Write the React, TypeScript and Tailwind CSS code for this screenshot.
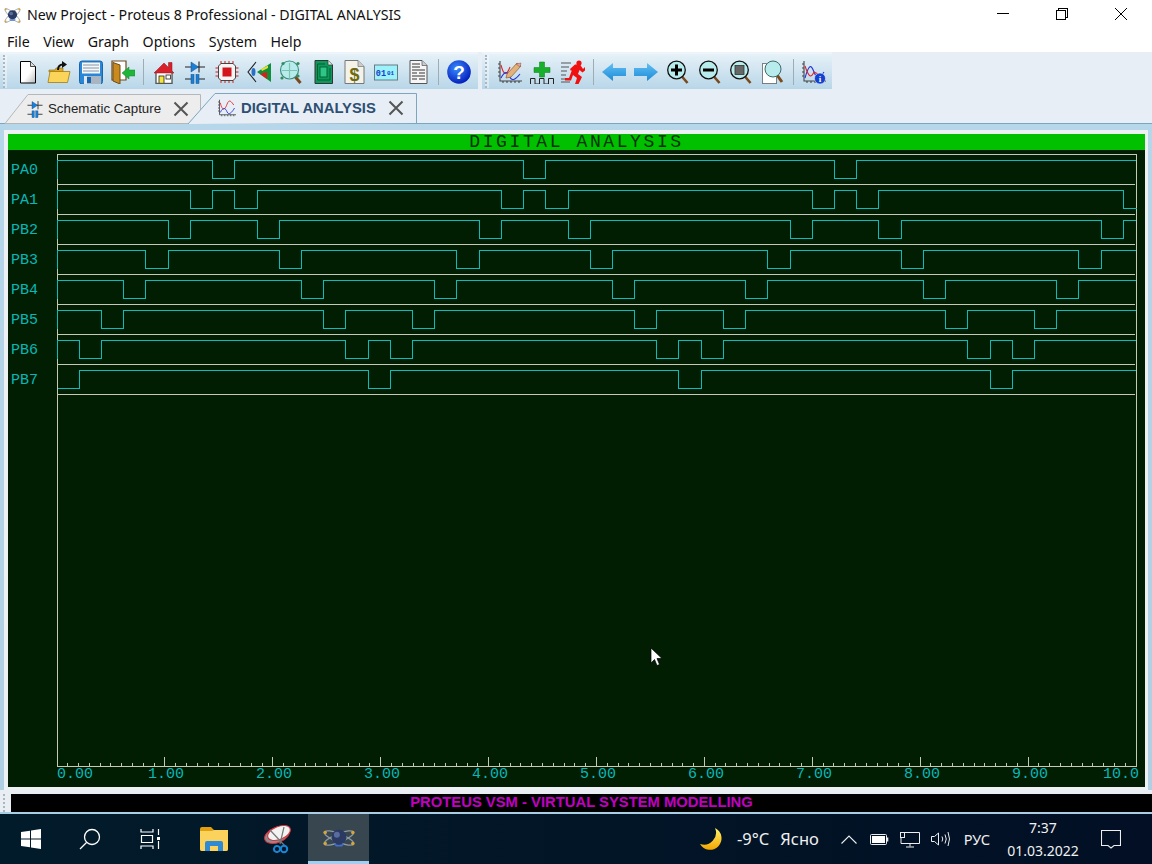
import React from "react"

type IconProps = { className?: string }

const signals: { name: string; pulses: number[][] }[] = [
  { name: "PA0", pulses: [[212.5, 234.5], [523.5, 545.5], [834.5, 856.5]] },
  { name: "PA1", pulses: [[190.5, 212.5], [234.5, 257.5], [501.5, 523.5], [545.5, 568.5], [812.5, 834.5], [856.5, 878.5], [1123.5, 1137]] },
  { name: "PB2", pulses: [[168.5, 190.5], [257.5, 279.5], [479.5, 501.5], [568.5, 590.5], [790.5, 812.5], [878.5, 901.5], [1101.5, 1123.5]] },
  { name: "PB3", pulses: [[145.5, 168.5], [279.5, 301.5], [456.5, 479.5], [590.5, 612.5], [767.5, 790.5], [901.5, 923.5], [1078.5, 1101.5]] },
  { name: "PB4", pulses: [[123.5, 145.5], [301.5, 323.5], [434.5, 456.5], [612.5, 634.5], [745.5, 767.5], [923.5, 945.5], [1056.5, 1078.5]] },
  { name: "PB5", pulses: [[101.5, 123.5], [323.5, 345.5], [412.5, 434.5], [634.5, 656.5], [723.5, 745.5], [945.5, 967.5], [1034.5, 1056.5]] },
  { name: "PB6", pulses: [[79.5, 101.5], [345.5, 368.5], [390.5, 412.5], [656.5, 678.5], [701.5, 723.5], [967.5, 990.5], [1012.5, 1034.5]] },
  { name: "PB7", pulses: [[57.5, 79.5], [368.5, 390.5], [678.5, 701.5], [990.5, 1012.5]] },
]

function wavePath(pulses: number[][], row: number) {
  const high = 160.5 + row * 30
  const low = 178.5 + row * 30
  let d = `M57.5 ${low}`
  if (pulses[0][0] > 58) d += ` V${high}`
  pulses.forEach(([a, b], i) => {
    if (i > 0 || a > 58) d += ` H${a} V${low}`
    d += ` H${b}`
    if (b < 1136) d += ` V${high}`
  })
  return d + " H1136"
}

const ticks = Array.from({ length: 100 }, (_, i) => i + 1)

function Plot() {
  return (
    <svg width="1080" height="613" viewBox="57 154 1080 613" className="block" shapeRendering="crispEdges">
      <path d="M57.5 154.5 H1136.5 V766.5 H57.5 Z" fill="none" stroke="#c6c9b8" />
      {signals.map((_, i) => (
        <path key={i} d={`M58 ${184.5 + i * 30} H1135`} stroke="#c6c9b8" />
      ))}
      {ticks.map((t) => {
        const x = Math.floor(57 + t * 10.79) + 0.5
        return <path key={t} d={`M${x} 766 V${t % 10 === 0 ? 757 : 763}`} stroke="#c6c9b8" />
      })}
      {signals.map((s, i) => (
        <path key={s.name} d={wavePath(s.pulses, i)} fill="none" stroke="#0cbcbc" />
      ))}
    </svg>
  )
}

function Proteus({ className, tilt }: IconProps & { tilt: number }) {
  const rad = (tilt * Math.PI) / 180
  const dx = Math.cos(rad) * 14
  const dy = Math.sin(rad) * 14
  return (
    <svg viewBox="0 0 32 32" className={className}>
      <ellipse cx="16" cy="16" rx="15" ry="4" fill="none" stroke="#8d99a3" strokeWidth="1.2" transform={`rotate(${tilt} 16 16)`} />
      <ellipse cx="16" cy="16" rx="15" ry="4" fill="none" stroke="#8d99a3" strokeWidth="1.2" transform={`rotate(${-tilt} 16 16)`} />
      <circle cx="16" cy="15" r="7" fill="#2b3a63" />
      <circle cx="14" cy="13" r="2.8" fill="#5a6c9c" />
      <path d="M11 21q5 3 10 0l-2 3h-6z" fill="#3f6fd6" />
      <circle cx={16 - dx} cy={16 - dy} r="1.6" fill="#d9a437" />
      <circle cx={16 + dx} cy={16 - dy} r="1.6" fill="#d9a437" />
      <circle cx={16 - dx} cy={16 + dy} r="1.6" fill="#d9a437" />
      <circle cx={16 + dx} cy={16 + dy} r="1.6" fill="#d9a437" />
    </svg>
  )
}

function NewDoc() {
  return (
    <svg viewBox="0 0 24 24" className="w-6 h-6">
      <defs>
        <linearGradient id="docg" x1="0" y1="0" x2="1" y2="1">
          <stop offset="0.55" stopColor="#fff" />
          <stop offset="1" stopColor="#b8b8b8" />
        </linearGradient>
      </defs>
      <path d="M5.5 1.5H15.5L20.5 6.5V23H5.5Z" fill="url(#docg)" stroke="#000" />
      <path d="M15.5 1.5V6.5H20.5" fill="#ddd" stroke="#000" strokeWidth="0.7" />
    </svg>
  )
}

function OpenFolder() {
  return (
    <svg viewBox="0 0 24 24" className="w-6 h-6">
      <path d="M2 10h6l1-2h7v4H2z" fill="#e0a920" stroke="#8a6a10" strokeWidth="0.6" />
      <path d="M3 11.5H23L20.5 22.5H1Z" fill="#fbd559" stroke="#a07c14" strokeWidth="0.8" />
      <path d="M11 10c0-4 2-5.5 5-5.5" fill="none" stroke="#111" strokeWidth="2" />
      <path d="M15 1l5 3.5-5 3.5z" fill="#111" />
    </svg>
  )
}

function Save() {
  return (
    <svg viewBox="0 0 24 24" className="w-6 h-6">
      <rect x="0.5" y="1" width="23" height="23" rx="2.5" fill="#2a86d6" stroke="#1b66a8" />
      <rect x="3" y="2.5" width="18" height="11" fill="#f4f8fb" />
      <path d="M4 5h16M4 8h16M4 11h16" stroke="#7a8a99" strokeWidth="0.9" />
      <rect x="5" y="16" width="17" height="8" fill="#a9b6c2" />
      <rect x="8" y="17" width="4" height="6" fill="#1566b6" />
      <rect x="5" y="16" width="3" height="8" fill="#dfe6ec" />
    </svg>
  )
}

function ExitDoor() {
  return (
    <svg viewBox="0 0 24 24" className="w-6 h-6">
      <path d="M1 1H15V20H1Z" fill="#fff" stroke="#6e4a1c" strokeWidth="1.2" />
      <path d="M2 2.5L9 5V24L2 21Z" fill="#c98a1e" stroke="#6e4a1c" />
      <path d="M11 13L18 7V10H24V16H18V19Z" fill="#1fb53a" stroke="#128a26" strokeWidth="0.5" />
    </svg>
  )
}

function Home() {
  return (
    <svg viewBox="0 0 24 24" className="w-6 h-6">
      <rect x="4" y="12" width="16" height="11.5" fill="#fff" stroke="#222" />
      <path d="M2 13L12 3L16.5 7.5V2.5H20V11L22 13Z" fill="#d9202a" stroke="#8c1118" strokeWidth="0.5" />
      <rect x="7" y="16" width="5" height="7.5" fill="#f6e63a" stroke="#222" strokeWidth="0.8" />
      <rect x="14" y="15" width="4.5" height="4" fill="#fff" stroke="#222" strokeWidth="0.8" />
      <path d="M4 23.5H20" stroke="#555" strokeWidth="1.4" />
    </svg>
  )
}

function Schematic({ className = "w-6 h-6" }: IconProps) {
  return (
    <svg viewBox="0 0 24 24" className={className}>
      <path d="M2 7H22M2 19H9.5M14.5 19H22" stroke="#222" strokeWidth="1.1" />
      <path d="M8 2V12L15.5 7Z" fill="#1b7fd6" stroke="#0c4f8e" strokeWidth="0.5" />
      <path d="M16 1.5V12.5" stroke="#222" strokeWidth="1.1" />
      <rect x="8" y="14.5" width="3" height="9" fill="#1b7fd6" stroke="#0c4f8e" strokeWidth="0.5" />
      <rect x="13" y="14.5" width="3" height="9" fill="#1b7fd6" stroke="#0c4f8e" strokeWidth="0.5" />
    </svg>
  )
}

function Chip() {
  return (
    <svg viewBox="0 0 24 24" className="w-6 h-6">
      <path d="M6 1V5M10 1V5M14 1V5M18 1V5M6 19V23M10 19V23M14 19V23M18 19V23M0.5 8H5M0.5 12H5M0.5 16H5M19 8H23.5M19 12H23.5M19 16H23.5" stroke="#e05a5a" strokeWidth="1.5" />
      <path d="M6 3.5H18L20.5 6V18L18 20.5H6L3.5 18V6Z" fill="#f4f4f4" stroke="#333" strokeWidth="0.9" />
      <rect x="7.5" y="7.5" width="9" height="9" fill="#d4141c" />
    </svg>
  )
}

function View3D() {
  return (
    <svg viewBox="0 0 24 24" className="w-6 h-6">
      <path d="M9 2L1 12L9 22" fill="none" stroke="#222" strokeWidth="1.1" />
      <ellipse cx="6.5" cy="12" rx="2" ry="4" fill="#2b6fc4" />
      <path d="M10 12L24 3V22Z" fill="#0e8f3a" />
      <path d="M14 9L21 5.5V8L15 11Z" fill="#e7dc2e" />
      <path d="M13 14L20 12V19Z" fill="#e21a1a" />
    </svg>
  )
}

function Magnifier({ children, lens = "#b8ecec" }: { children?: React.ReactNode; lens?: string }) {
  return (
    <svg viewBox="0 0 24 24" className="w-6 h-6">
      <path d="M15.5 16L21.5 23" stroke="#7a4a1a" strokeWidth="2.6" />
      <circle cx="10.5" cy="10" r="8.8" fill={lens} stroke="#111" strokeWidth="1.3" />
      {children}
    </svg>
  )
}

function ZoomArea() {
  return (
    <svg viewBox="0 0 24 24" className="w-6 h-6">
      <path d="M15.5 16L21.5 23" stroke="#7a4a1a" strokeWidth="3" />
      <circle cx="10.5" cy="10" r="9" fill="#b8ecec" stroke="#3c8f7e" strokeWidth="1.2" />
      <path d="M3 10.5H18M10.5 3V18" stroke="#7cc4b0" strokeWidth="1.2" />
      <circle cx="4" cy="3.5" r="1.6" fill="#2e8f5a" />
      <circle cx="19" cy="3.5" r="1.6" fill="#2e8f5a" />
      <circle cx="3" cy="18" r="1.6" fill="#2e8f5a" />
      <circle cx="19" cy="16" r="1.6" fill="#2e8f5a" />
    </svg>
  )
}

function Pcb() {
  return (
    <svg viewBox="0 0 24 24" className="w-6 h-6">
      <path d="M4 0.5H17L21.5 5V23.5H4Z" fill="#0c9a5c" stroke="#333" />
      <path d="M17 0.5V5H21.5" fill="#e8e8e8" stroke="#333" strokeWidth="0.7" />
      <path d="M6.5 4H14M6.5 20H19M6.5 4V20M19 8V20" stroke="#0a5a30" strokeWidth="1" fill="none" />
      <rect x="9" y="7" width="7" height="10" fill="#2fc488" stroke="#063" />
    </svg>
  )
}

function Dollar() {
  return (
    <svg viewBox="0 0 24 24" className="w-6 h-6">
      <path d="M3 0.5H16L22 6.5V23.5H3Z" fill="#f3f3ea" stroke="#777" />
      <path d="M16 0.5V6.5H22" fill="#ccc" stroke="#777" strokeWidth="0.7" />
      <text x="12.5" y="21" textAnchor="middle" fontSize="18" fontWeight="700" fill="#6f6a10" fontFamily="Liberation Sans, sans-serif">$</text>
    </svg>
  )
}

function Binary() {
  return (
    <svg viewBox="0 0 24 24" className="w-6 h-6">
      <rect x="0.5" y="5" width="23" height="15" fill="#9cf2fb" stroke="#6b7a80" strokeWidth="1" />
      <text x="1.8" y="15.5" fontSize="8.5" fontWeight="700" fill="#1440c8" fontFamily="Liberation Mono, monospace">01</text>
      <text x="13" y="15" fontSize="6" fontWeight="700" fill="#1440c8" fontFamily="Liberation Mono, monospace">01</text>
    </svg>
  )
}

function Report() {
  return (
    <svg viewBox="0 0 24 24" className="w-6 h-6">
      <path d="M4 0.5H16L21 5.5V23.5H4Z" fill="#f6f6f6" stroke="#555" />
      <path d="M16 0.5V5.5H21" fill="#ccc" stroke="#555" strokeWidth="0.7" />
      <path d="M6 4H14M6 7H14M6 10H19M6 13H11M13 13H19M6 16H19M6 19H11M13 19H19" stroke="#333" strokeWidth="1" />
    </svg>
  )
}

function Help() {
  return (
    <svg viewBox="0 0 24 24" className="w-6 h-6">
      <defs>
        <radialGradient id="helpg" cx="0.4" cy="0.35" r="0.7">
          <stop offset="0" stopColor="#3a8cff" />
          <stop offset="1" stopColor="#0018b8" />
        </radialGradient>
      </defs>
      <circle cx="12" cy="12" r="11.8" fill="url(#helpg)" />
      <text x="12" y="19" textAnchor="middle" fontSize="19" fontWeight="700" fill="#fff" fontFamily="Liberation Sans, sans-serif">?</text>
    </svg>
  )
}

function GraphAxes() {
  return <path d="M2 1V21H24M2 4H0M2 8H0M2 12H0M2 16H0M5 21V23M9 21V23M13 21V23M17 21V23M21 21V23" fill="none" stroke="#444" strokeWidth="1.1" />
}

function GraphTab({ className = "w-6 h-6" }: IconProps) {
  return (
    <svg viewBox="0 0 24 24" className={className}>
      <GraphAxes />
      <path d="M3 5c3 12 6 10 9 2s6-3 9 1" fill="none" stroke="#e0262a" strokeWidth="1.2" />
      <path d="M3 18c4-8 7-6 9-1s6 2 10-5" fill="none" stroke="#2636d8" strokeWidth="1.2" />
    </svg>
  )
}

function GraphEdit() {
  return (
    <svg viewBox="0 0 24 24" className="w-6 h-6">
      <GraphAxes />
      <path d="M3 5c3 12 6 10 9 2" fill="none" stroke="#e0262a" strokeWidth="1.1" />
      <path d="M3 18c4-8 7-6 9-1s6 2 10-3" fill="none" stroke="#2636d8" strokeWidth="1.1" />
      <path d="M9 14L19 3L23 6L13 17L8 18Z" fill="#e3b27a" stroke="#8c5a32" strokeWidth="0.7" />
      <path d="M18 4L22 7L23 3Z" fill="#e6a0a0" stroke="#8c5a32" strokeWidth="0.5" />
    </svg>
  )
}

function AddPulse() {
  return (
    <svg viewBox="0 0 24 24" className="w-6 h-6">
      <path d="M9.5 2H14.5V7.5H20V12.5H14.5V17H9.5V12.5H4V7.5H9.5Z" fill="#18b02a" stroke="#0c7a1a" strokeWidth="0.5" />
      <path d="M0.5 24V18.5H5V24H9.5V18.5H14V24H18.5V18.5H23.5V24" fill="none" stroke="#222" strokeWidth="1" />
    </svg>
  )
}

function Runner() {
  return (
    <svg viewBox="0 0 24 24" className="w-6 h-6">
      <path d="M0 3H10M0 7H8M0 11H6M0 15H5M0 19H8M0 22H9" stroke="#555" strokeWidth="1.2" />
      <circle cx="18" cy="3" r="2.6" fill="#f01010" />
      <path d="M9 9L14 4.5H19L22 9L24 7V10.5L21.5 12.5L18.5 10L17 14L21 17L17.5 24H14L16 18L12 15L10 20.5H4V18H8L11 10L10 11Z" fill="#f01010" />
    </svg>
  )
}

function ArrowIcon({ flip }: { flip?: boolean }) {
  return (
    <svg viewBox="0 0 24 24" className={flip ? "w-6 h-6 -scale-x-100" : "w-6 h-6"}>
      <defs>
        <linearGradient id="arrg" x1="0" y1="0" x2="0" y2="1">
          <stop offset="0" stopColor="#62c0f2" />
          <stop offset="1" stopColor="#1c8ad8" />
        </linearGradient>
      </defs>
      <path d="M0 12L11 3V8H24V16H11V21Z" fill="url(#arrg)" />
    </svg>
  )
}

function ZoomPage() {
  return (
    <svg viewBox="0 0 24 24" className="w-6 h-6">
      <rect x="1.5" y="3.5" width="14" height="20" fill="#fff" stroke="#111" strokeDasharray="1 1" />
      <path d="M16 15L21 22" stroke="#7a4a1a" strokeWidth="3" />
      <circle cx="12" cy="9" r="8" fill="#b8ecec" stroke="#3a6a6a" />
    </svg>
  )
}

function GraphInfo() {
  return (
    <svg viewBox="0 0 24 24" className="w-6 h-6">
      <GraphAxes />
      <path d="M3 18c4-14 6-14 9-6s6 6 10 0" fill="none" stroke="#2636d8" strokeWidth="1.1" />
      <path d="M3 6c4 12 6 12 9 6l4 2" fill="none" stroke="#e0262a" strokeWidth="1.1" />
      <circle cx="18" cy="18.5" r="5.5" fill="#1240d0" stroke="#fff" strokeWidth="0.5" />
      <text x="18" y="22" textAnchor="middle" fontSize="9" fontWeight="700" fill="#fff" fontFamily="Liberation Serif, serif">i</text>
    </svg>
  )
}

function Grip() {
  return <div className="w-[4px] h-[33px] ml-[3px] border-l-2 border-dotted border-[#a9b7c2] bg-white/40" />
}

function Sep() {
  return <div className="w-[1px] h-[26px] mx-[4px] bg-[#a0acb3]" />
}

function Slot({ children }: { children: React.ReactNode }) {
  return <div className="w-[31.8px] flex items-center justify-center">{children}</div>
}

function TaskSlot({ children, active }: { children: React.ReactNode; active?: boolean }) {
  return (
    <div className={active ? "w-[61px] h-full flex items-center justify-center bg-[#38474f] border-b-[3px] border-[#9fd0f2]" : "w-[61px] h-full flex items-center justify-center"}>
      {children}
    </div>
  )
}

const axisLabels = ["1.00", "2.00", "3.00", "4.00", "5.00", "6.00", "7.00", "8.00"]

export default function App() {
  return (
    <div className="relative w-[1152px] h-[864px] overflow-hidden bg-white font-['Noto_Sans',sans-serif] text-black">
      {/* title bar */}
      <div className="h-[30px] flex items-center">
        <Proteus tilt={42} className="w-[21px] h-[21px] ml-[2px] mr-[4px]" />
        <span className="text-[14.2px] text-[#111]">New Project - Proteus 8 Professional - DIGITAL ANALYSIS</span>
        <div className="ml-auto flex items-center text-black pb-[3px] mr-[2px]">
          <div className="w-[59px] h-[27px] flex items-center justify-center">
            <div className="w-[12px] h-[1px] bg-black" />
          </div>
          <div className="w-[59px] h-[27px] flex items-center justify-center">
            <svg width="14" height="14" viewBox="0 0 14 14" fill="none" stroke="#000" shapeRendering="crispEdges">
              <rect x="1.5" y="3.5" width="9" height="9" rx="1" />
              <path d="M3.5 3.5V1.5H12.5V10.5H10.5" />
            </svg>
          </div>
          <div className="w-[59px] h-[27px] flex items-center justify-center">
            <svg width="14" height="14" viewBox="0 0 14 14" stroke="#000" strokeWidth="1">
              <path d="M1 1L13 13M13 1L1 13" />
            </svg>
          </div>
        </div>
      </div>

      {/* menu */}
      <div className="h-[22px] flex items-center pl-[7px] pt-[1px] gap-[13.5px] text-[14.2px] text-[#111]">
        <span>File</span>
        <span>View</span>
        <span>Graph</span>
        <span>Options</span>
        <span>System</span>
        <span>Help</span>
      </div>

      {/* toolbars */}
      <div className="h-[37px] flex bg-[#e8eef5]">
        <div className="w-[478px] flex items-center border-t-2 border-[#eef5fa] bg-gradient-to-b from-[#e6f1f8] to-[#b8d6e8]">
          <Grip />
          <div className="w-[4.5px]" />
          <Slot><NewDoc /></Slot>
          <Slot><OpenFolder /></Slot>
          <Slot><Save /></Slot>
          <Slot><ExitDoor /></Slot>
          <Sep />
          <Slot><Home /></Slot>
          <Slot><Schematic /></Slot>
          <Slot><Chip /></Slot>
          <Slot><View3D /></Slot>
          <Slot><ZoomArea /></Slot>
          <Slot><Pcb /></Slot>
          <Slot><Dollar /></Slot>
          <Slot><Binary /></Slot>
          <Slot><Report /></Slot>
          <Sep />
          <Slot><Help /></Slot>
        </div>
        <div className="w-[350px] ml-[4px] flex items-center border-t-2 border-[#eef5fa] bg-gradient-to-b from-[#e6f1f8] to-[#b8d6e8]">
          <Grip />
          <div className="w-[5px]" />
          <Slot><GraphEdit /></Slot>
          <Slot><AddPulse /></Slot>
          <Slot><Runner /></Slot>
          <Sep />
          <Slot><ArrowIcon /></Slot>
          <Slot><ArrowIcon flip /></Slot>
          <Slot>
            <Magnifier>
              <path d="M5 10H16M10.5 4.5V15.5" stroke="#000" strokeWidth="3" />
            </Magnifier>
          </Slot>
          <Slot>
            <Magnifier>
              <path d="M5 10H16" stroke="#000" strokeWidth="3" />
            </Magnifier>
          </Slot>
          <Slot>
            <Magnifier>
              <rect x="6" y="5.5" width="9" height="9" fill="#666" stroke="#333" strokeWidth="0.8" />
            </Magnifier>
          </Slot>
          <Slot><ZoomPage /></Slot>
          <Sep />
          <Slot><GraphInfo /></Slot>
        </div>
      </div>

      {/* tabs */}
      <div className="h-[35px] flex items-end bg-[#e8eef5] border-b border-[#7ba6bf]">
        <div className="relative w-[198px] h-[29px] pt-[1px] ml-[3px] flex items-center pl-[23px] text-[13.3px] text-[#222] font-['Liberation_Sans',sans-serif]">
          <svg width="198" height="30" viewBox="0 0 198 30" className="absolute left-0 top-0">
            <path d="M2 29.5L25 0.5H197.5V18L186 29.5H2Z" fill="#ededed" stroke="#b4b8bb" />
          </svg>
          <Schematic className="relative w-[18px] h-[22px] mr-[4px]" />
          <span className="relative">Schematic Capture</span>
          <svg width="16" height="16" viewBox="0 0 16 16" className="relative ml-[12px]" stroke="#555" strokeWidth="2">
            <path d="M1.5 1.5L14.5 14.5M14.5 1.5L1.5 14.5" />
          </svg>
        </div>
        <div className="relative w-[230px] h-[30px] -ml-[13px] flex items-center pl-[30px] text-[14.8px] font-bold text-[#2d4f72] font-['Liberation_Sans',sans-serif]">
          <svg width="230" height="31" viewBox="0 0 230 31" className="absolute left-0 top-0">
            <path d="M0 31L27 0.5H228.5V30" fill="#e8eef5" stroke="#7ba6bf" />
          </svg>
          <GraphTab className="relative w-[18px] h-[18px] mr-[5px]" />
          <span className="relative">DIGITAL ANALYSIS</span>
          <svg width="16" height="16" viewBox="0 0 16 16" className="relative ml-[12px]" stroke="#555" strokeWidth="2">
            <path d="M1.5 1.5L14.5 14.5M14.5 1.5L1.5 14.5" />
          </svg>
        </div>
      </div>

      {/* analysis panel */}
      <div className="bg-gradient-to-b from-[#b6d6ea] to-[#b1cfe2] h-[666px] pt-[6px] pl-[4px] pr-[4px]">
        <div className="h-[660px] bg-[#eef1f3] pt-[4px] px-[4px]">
          <div className="h-[16px] w-[1137px] bg-[#00c000] flex items-center justify-center text-[18px] leading-none tracking-[2.6px] text-[#013001] font-['Liberation_Mono',monospace]">
            DIGITAL ANALYSIS
          </div>
          <div className="h-[637px] w-[1137px] bg-[#011d02] flex font-['Liberation_Mono',monospace] text-[15px] text-[#08b8b8]">
            <div className="w-[49px] pt-[6px] pl-[3px]">
              {signals.map((s) => (
                <div key={s.name} className="h-[30px] flex items-center">{s.name}</div>
              ))}
            </div>
            <div className="pt-[4px]">
              <Plot />
              <div className="flex h-[16px] items-center">
                <div className="w-[91px]">0.00</div>
                {axisLabels.map((l) => (
                  <div key={l} className="w-[108px]">{l}</div>
                ))}
                <div className="w-[91px]">9.00</div>
                <div>10.0</div>
              </div>
            </div>
          </div>
        </div>
      </div>

      {/* status bar */}
      <div className="h-[24px] flex items-start pt-[4px] bg-[#e9eef2] border-b-2 border-[#a9cde2]">
        <div className="w-[4px] h-[18px] ml-[3px] border-l-2 border-dotted border-[#a9b7c2]" />
        <div className="ml-[4px] flex-1 h-[18px] pb-[2px] bg-black flex items-center justify-center text-[14.8px] font-bold text-[#c000c0] font-['Liberation_Sans',sans-serif]">
          PROTEUS VSM - VIRTUAL SYSTEM MODELLING
        </div>
      </div>

      {/* taskbar */}
      <div className="h-[50px] flex items-center bg-gradient-to-r from-[#021b2a] to-[#020f24] text-[#f0f0f0]">
        <TaskSlot>
          <svg width="20" height="20" viewBox="0 0 20 20" fill="#fff">
            <path d="M0 3L9 1.7V9.5H0ZM10 1.5L20 0V9.5H10ZM0 10.5H9V18.3L0 17ZM10 10.5H20V20L10 18.5Z" />
          </svg>
        </TaskSlot>
        <TaskSlot>
          <svg width="22" height="22" viewBox="0 0 22 22" className="mr-[3px]" fill="none" stroke="#fff" strokeWidth="1.3">
            <circle cx="13" cy="9" r="7.5" />
            <path d="M7.5 14.5L1 21" />
          </svg>
        </TaskSlot>
        <TaskSlot>
          <svg width="22" height="20" viewBox="0 0 22 20" className="mr-[4px]" fill="none" stroke="#fff" strokeWidth="1.2">
            <path d="M1 0V3H13V0M1 20V17H13V20M1.5 6.5H12.5V13.5H1.5ZM18.5 0V6M18.5 12V20" />
            <rect x="17" y="8" width="3" height="3" fill="#fff" stroke="none" />
          </svg>
        </TaskSlot>
        <TaskSlot>
          <svg width="28" height="24" viewBox="0 0 28 24">
            <path d="M0 2Q0 0 2 0H11L14 3H28V22Q28 24 26 24H2Q0 24 0 22Z" fill="#e2a011" />
            <path d="M0 4H12L14 3H28V22Q28 24 26 24H2Q0 24 0 22Z" fill="#fbd25c" />
            <path d="M5 24V16Q5 14 7 14H21Q23 14 23 16V24H18V19H10V24Z" fill="#2f8ad6" />
          </svg>
        </TaskSlot>
        <div className="w-[3px]" />
        <TaskSlot>
          <svg width="30" height="30" viewBox="0 0 30 30">
            <ellipse cx="14" cy="11" rx="13" ry="7.5" transform="rotate(-22 14 11)" fill="#8a8f94" stroke="#d8313a" strokeWidth="1" />
            <ellipse cx="16" cy="9" rx="12" ry="6.5" transform="rotate(-22 16 9)" fill="#f2f2f2" stroke="#d8313a" strokeWidth="1" />
            <path d="M7 6L22 22M21 3L17 20" stroke="#777" strokeWidth="1.2" />
            <circle cx="21" cy="25" r="3.2" fill="none" stroke="#1a86d6" strokeWidth="2" />
            <circle cx="14" cy="25" r="3" fill="none" stroke="#1a86d6" strokeWidth="2" transform="rotate(20 14 25)" />
          </svg>
        </TaskSlot>
        <TaskSlot active>
          <Proteus tilt={22} className="w-[34px] h-[34px]" />
        </TaskSlot>

        <div className="ml-[330px] w-[26px]">
          <svg width="24" height="24" viewBox="0 0 24 24">
            <defs>
              <linearGradient id="moong" x1="0" y1="0" x2="0" y2="1">
                <stop offset="0" stopColor="#fff36a" />
                <stop offset="1" stopColor="#f2a500" />
              </linearGradient>
            </defs>
            <path d="M16 1A11.5 11.5 0 1 1 1 17A12 12 0 0 0 16 1Z" fill="url(#moong)" />
          </svg>
        </div>
        <span className="ml-[12px] text-[16.5px] leading-none">-9°C</span>
        <span className="ml-[11px] text-[16.5px] leading-none">Ясно</span>
        <svg width="16" height="9" viewBox="0 0 16 9" className="ml-[22px]" fill="none" stroke="#eee" strokeWidth="1.1">
          <path d="M0.5 8.5L8 1L15.5 8.5" />
        </svg>
        <svg width="19" height="11" viewBox="0 0 19 11" className="ml-[13px]" fill="none" stroke="#eee" strokeWidth="1">
          <rect x="0.5" y="0.5" width="16" height="10" rx="1" />
          <rect x="2" y="2" width="13" height="7" fill="#fff" stroke="none" />
          <path d="M17.5 3.5V7.5" strokeWidth="1.6" />
        </svg>
        <svg width="20" height="17" viewBox="0 0 20 17" className="ml-[11px]" fill="none" stroke="#eee" strokeWidth="1">
          <path d="M4 1.5H19.5V12.5H1V7" />
          <rect x="0.5" y="1.5" width="4" height="5" />
          <path d="M10 12.5V15.5M6 16H14" />
        </svg>
        <svg width="20" height="16" viewBox="0 0 20 16" className="ml-[11px]" fill="none" stroke="#eee" strokeWidth="1">
          <path d="M0.5 5.5H3.5L7.5 2V14L3.5 10.5H0.5Z" />
          <path d="M11 5.5Q12.5 8 11 10.5M14 3.5Q16.5 8 14 12.5M17 1Q20 8 17 15" />
        </svg>
        <span className="ml-[13px] text-[14.5px] leading-none">РУС</span>
        <div className="ml-[18px] w-[70px] flex flex-col items-center text-[14px] leading-[23px]">
          <span>7:37</span>
          <span>01.03.2022</span>
        </div>
        <svg width="20" height="20" viewBox="0 0 20 20" className="ml-[23px]" fill="none" stroke="#eee" strokeWidth="1.1">
          <path d="M0.5 1.5H19.5V16.5H13L10 19L7 16.5H0.5Z" />
        </svg>
      </div>

      {/* mouse pointer */}
      <svg width="13" height="20" viewBox="0 0 13 20" className="absolute left-[650px] top-[647px]">
        <path d="M1 1V16L4.5 12.5L7 18.5L9.5 17.5L7 11.5H12Z" fill="#fff" stroke="#000" strokeWidth="0.7" />
      </svg>
    </div>
  )
}
